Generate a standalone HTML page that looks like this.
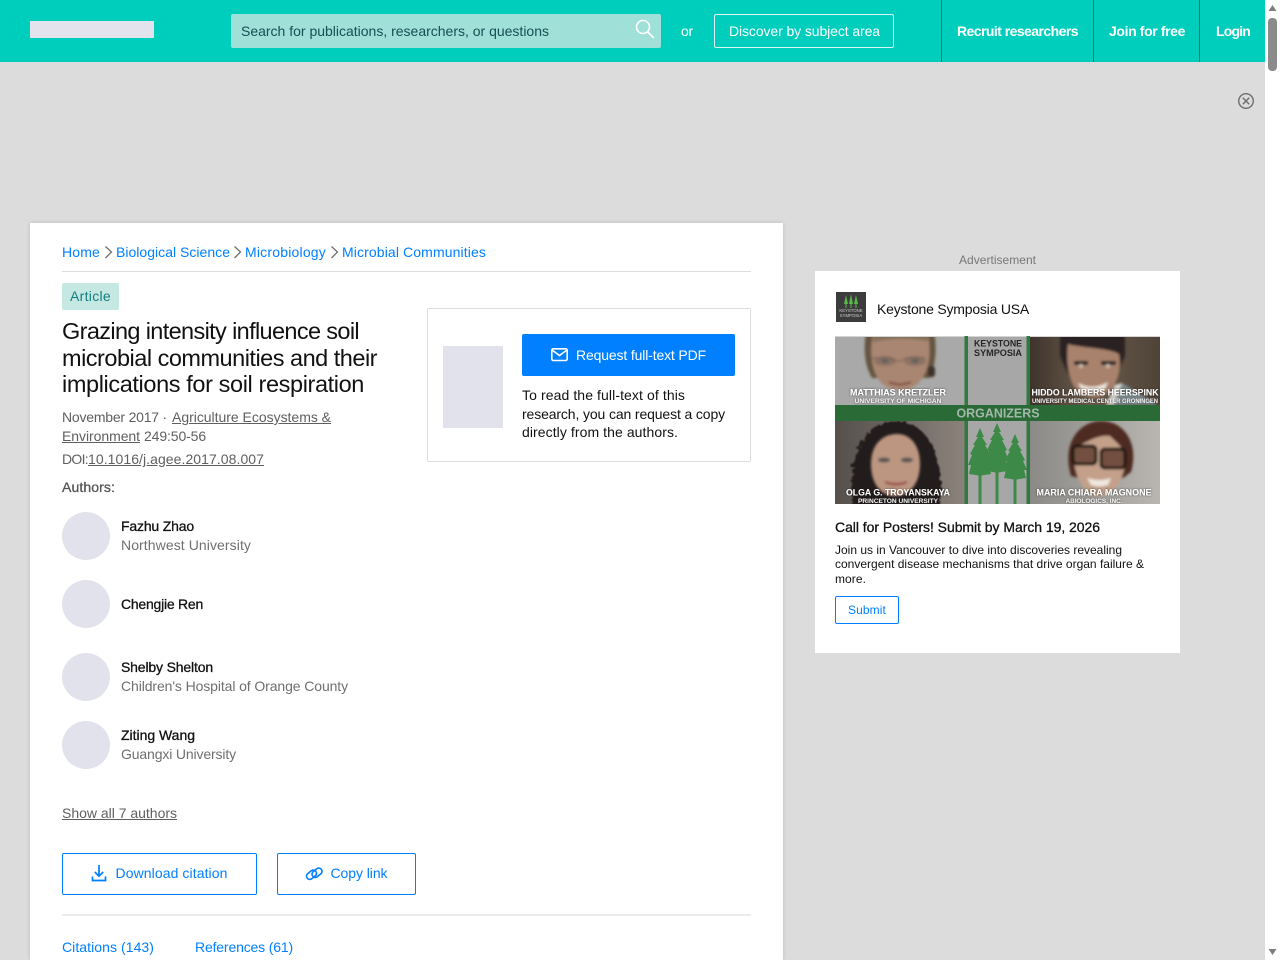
<!DOCTYPE html>
<html lang="en"><head><meta charset="utf-8"><title>Grazing intensity influence soil microbial communities</title>
<style>
html,body{margin:0;padding:0;width:1280px;height:960px;overflow:hidden;background:#fff}
body{font-family:"Liberation Sans",sans-serif;position:relative}
.a,.t{position:absolute}
.t{white-space:nowrap;line-height:20px;height:20px;font-size:14px}
.b{color:#0080ff}.g{color:#5f5f5f}.k{color:#111}
.u{text-decoration:underline}
.m{-webkit-text-stroke:.3px currentColor}
.w{color:#fff}
svg{position:absolute;display:block;overflow:visible}
</style></head><body>
<div class="a" style="left:0;top:0;width:1265px;height:960px;background:#dcdcdc"></div>

<!-- header -->
<div class="a" style="left:0;top:0;width:1265px;height:62px;background:#00cebc"></div>
<div class="a" style="left:30px;top:21px;width:124px;height:17px;background:#e3e3ed"></div>
<div class="a" style="left:231px;top:14px;width:430px;height:34px;background:#9fe0d9;border-radius:2px"></div>
<div class="t" style="left:241px;top:21px;color:#164f52;--w:308">Search for publications, researchers, or questions</div>
<svg style="left:625px;top:10px" width="40" height="40" fill="none" stroke="#fff" stroke-width="1.6"><circle cx="18" cy="17" r="6.5"/><path d="M22.8 22l6 6"/></svg>
<div class="t w" style="left:681px;top:21px;--w:12">or</div>
<div class="a" style="left:714px;top:14px;width:178px;height:32px;border:1.5px solid #d8f6f3;border-radius:2px"></div>
<div class="t w" style="left:729px;top:21px;--w:151">Discover by subject area</div>
<div class="a" style="left:941px;top:0;width:1px;height:62px;background:#047f77"></div>
<div class="a" style="left:1093px;top:0;width:1px;height:62px;background:#047f77"></div>
<div class="a" style="left:1199px;top:0;width:1px;height:62px;background:#047f77"></div>
<div class="t w" style="left:957px;top:21px;font-weight:bold;--w:121">Recruit researchers</div>
<div class="t w" style="left:1109px;top:21px;font-weight:bold;--w:76">Join for free</div>
<div class="t w" style="left:1216px;top:21px;font-weight:bold;--w:34">Login</div>

<!-- scrollbar -->
<div class="a" style="left:1268px;top:18px;width:9px;height:53px;background:#8b8b8b;border-radius:4px"></div>
<svg style="left:1265px;top:0" width="15" height="960" fill="#7d7d7d"><path d="M3.5 11L7.5 5l4 6z"/><path d="M3.5 949l4 6 4-6z"/></svg>
<!-- close -->
<svg style="left:1230px;top:85px" width="30" height="30" fill="none" stroke="#6d6d6d" stroke-width="1.4"><circle cx="16" cy="16" r="7.3"/><path d="M12.8 12.8l6.4 6.4M19.2 12.8l-6.4 6.4"/></svg>

<!-- card -->
<div class="a" style="left:30px;top:223px;width:753px;height:737px;background:#fff;box-shadow:0 0 4px rgba(0,0,0,.14)"></div>
<div class="t b" style="left:62px;top:242px;--w:38">Home</div>
<svg style="left:104px;top:245px" width="10" height="15" fill="none" stroke="#6f6f6f" stroke-width="1.3"><path d="M1.5 1.5L7.5 7l-6 6"/></svg>
<div class="t b" style="left:116px;top:242px;--w:114">Biological Science</div>
<svg style="left:233px;top:245px" width="10" height="15" fill="none" stroke="#6f6f6f" stroke-width="1.3"><path d="M1.5 1.5L7.5 7l-6 6"/></svg>
<div class="t b" style="left:245px;top:242px;--w:81">Microbiology</div>
<svg style="left:330px;top:245px" width="10" height="15" fill="none" stroke="#6f6f6f" stroke-width="1.3"><path d="M1.5 1.5L7.5 7l-6 6"/></svg>
<div class="t b" style="left:342px;top:242px;--w:144">Microbial Communities</div>
<div class="a" style="left:62px;top:271px;width:689px;height:1px;background:#ddd"></div>

<div class="a" style="left:62px;top:283px;width:57px;height:27px;background:#c6e8e3;border-radius:2px"></div>
<div class="t" style="left:70px;top:286px;color:#0f7f80;--w:41">Article</div>

<div class="t k" style="left:62px;top:318px;height:26px;line-height:26px;font-size:23.500px;--w:297">Grazing intensity influence soil</div>
<div class="t k" style="left:62px;top:345px;height:26px;line-height:26px;font-size:23.500px;--w:315">microbial communities and their</div>
<div class="t k" style="left:62px;top:371px;height:26px;line-height:26px;font-size:23.500px;--w:302">implications for soil respiration</div>

<div class="t g" style="left:62px;top:407px;--w:105">November 2017 ·</div>
<div class="t g u" style="left:172px;top:407px;--w:159">Agriculture Ecosystems &amp;</div>
<div class="t g u" style="left:62px;top:426px;--w:78">Environment</div>
<div class="t g" style="left:144px;top:426px;--w:62">249:50-56</div>
<div class="t g" style="left:62px;top:449px;--w:26">DOI:</div>
<div class="t g u" style="left:88px;top:449px;--w:176">10.1016/j.agee.2017.08.007</div>
<div class="t m" style="left:62px;top:477px;color:#555;--w:53">Authors:</div>

<div class="a" style="left:62px;top:512px;width:48px;height:48px;border-radius:50%;background:#e2e2ec"></div>
<div class="a" style="left:62px;top:580px;width:48px;height:48px;border-radius:50%;background:#e2e2ec"></div>
<div class="a" style="left:62px;top:653px;width:48px;height:48px;border-radius:50%;background:#e2e2ec"></div>
<div class="a" style="left:62px;top:721px;width:48px;height:48px;border-radius:50%;background:#e2e2ec"></div>

<div class="t k m" style="left:121px;top:516px;--w:73">Fazhu Zhao</div>
<div class="t" style="left:121px;top:535px;color:#6f6f6f;--w:130">Northwest University</div>
<div class="t k m" style="left:121px;top:594px;--w:82">Chengjie Ren</div>
<div class="t k m" style="left:121px;top:657px;--w:92">Shelby Shelton</div>
<div class="t" style="left:121px;top:676px;color:#6f6f6f;--w:227">Children's Hospital of Orange County</div>
<div class="t k m" style="left:121px;top:725px;--w:74">Ziting Wang</div>
<div class="t" style="left:121px;top:744px;color:#6f6f6f;--w:115">Guangxi University</div>

<div class="t g u" style="left:62px;top:803px;--w:115">Show all 7 authors</div>

<div class="a" style="left:62px;top:853px;width:193px;height:40px;border:1px solid #0080ff;border-radius:2px"></div>
<svg style="left:90px;top:864px" width="18" height="19" fill="none" stroke="#0080ff" stroke-width="1.7"><path d="M9 1v11M4.8 8L9 12.2 13.2 8M2.5 12.5V16.5h13V12.5"/></svg>
<div class="t b" style="left:115.500px;top:863px;--w:112">Download citation</div>
<div class="a" style="left:277px;top:853px;width:137px;height:40px;border:1px solid #0080ff;border-radius:2px"></div>
<svg style="left:304px;top:865px" width="20" height="18" fill="none" stroke="#0080ff" stroke-width="1.6"><rect x="2" y="6.500" width="11" height="6.500" rx="3.250" transform="rotate(-38 7.500 9.750)"/><rect x="7.500" y="4.500" width="11" height="6.500" rx="3.250" transform="rotate(-38 13 7.750)"/></svg>
<div class="t b" style="left:330.500px;top:863px;--w:57">Copy link</div>
<div class="a" style="left:62px;top:914px;width:689px;height:2px;background:#ececec"></div>
<div class="t b" style="left:62px;top:937px;--w:92">Citations (143)</div>
<div class="t b" style="left:195px;top:937px;--w:98">References (61)</div>

<!-- request box -->
<div class="a" style="left:427px;top:308px;width:322px;height:152px;border:1px solid #ddd;border-radius:2px"></div>
<div class="a" style="left:443px;top:346px;width:60px;height:82px;background:#e2e2ec"></div>
<div class="a" style="left:522px;top:334px;width:213px;height:42px;background:#0080ff;border-radius:2px"></div>
<svg style="left:550px;top:347px" width="19" height="16" fill="none" stroke="#fff" stroke-width="1.6"><rect x="1.800" y="1.800" width="15.400" height="11.700" rx="1.500"/><path d="M2 3l7.500 5.500L17 3"/></svg>
<div class="t w" style="left:576px;top:345px;--w:130">Request full-text PDF</div>
<div class="t k" style="left:522px;top:385px;--w:163">To read the full-text of this</div>
<div class="t k" style="left:522px;top:404px;--w:203">research, you can request a copy</div>
<div class="t k" style="left:522px;top:422px;--w:156">directly from the authors.</div>

<!-- ad -->
<div class="t" style="left:959px;top:250px;font-size:12px;color:#777;--w:77">Advertisement</div>
<div class="a" style="left:815px;top:271px;width:365px;height:382px;background:#fff"></div>
<svg style="left:836px;top:292px" width="30" height="30"><rect width="30" height="30" fill="#3c3c3c"/><path d="M10 3l2 9h-4zM15 2l2 10h-4zM20 3l2 9h-4z" fill="#57b947"/><rect x="9.500" y="11" width="1" height="5" fill="#57b947"/><rect x="14.500" y="11" width="1" height="5" fill="#57b947"/><rect x="19.500" y="11" width="1" height="5" fill="#57b947"/><text x="15" y="20" text-anchor="middle" font-size="4.300" fill="#ccc" font-family="Liberation Sans">KEYSTONE</text><text x="15" y="25" text-anchor="middle" font-size="4.300" fill="#ccc" font-family="Liberation Sans">SYMPOSIA</text></svg>
<div class="t k" style="left:877px;top:299px;--w:152">Keystone Symposia USA</div>

<svg style="left:835px;top:336px;overflow:hidden" width="325" height="168" viewBox="0 0 325 168" font-family="Liberation Sans">
<defs>
<filter id="b" x="-20%" y="-20%" width="140%" height="140%"><feGaussianBlur stdDeviation="1.200"/></filter>
<filter id="c" x="-20%" y="-20%" width="140%" height="140%"><feTurbulence type="fractalNoise" baseFrequency=".22" numOctaves="2" seed="3"/><feDisplacementMap in="SourceGraphic" scale="7"/><feGaussianBlur stdDeviation=".7"/></filter>
<filter id="s" x="-10%" y="-30%" width="120%" height="160%"><feDropShadow dx="0" dy="0" stdDeviation="1" flood-color="#000" flood-opacity=".65"/></filter>
<clipPath id="p1"><rect width="129.500" height="69"/></clipPath>
<clipPath id="p2"><rect x="195" width="130" height="69"/></clipPath>
<clipPath id="p3"><rect y="85" width="129.500" height="83"/></clipPath>
<clipPath id="p4"><rect x="195" y="85" width="130" height="83"/></clipPath>
<linearGradient id="d2" x1="0" x2="1"><stop offset="0" stop-color="#3e342c"/><stop offset=".45" stop-color="#6b5b4c"/><stop offset="1" stop-color="#4f4338"/></linearGradient>
<linearGradient id="d3" x1="0" x2="1"><stop offset="0" stop-color="#55504c"/><stop offset="1" stop-color="#8b827b"/></linearGradient>
<linearGradient id="d4" x1="0" x2="1"><stop offset="0" stop-color="#8b8a86"/><stop offset="1" stop-color="#b9b6b2"/></linearGradient>
</defs>
<rect width="325" height="168" fill="#a7a7a7"/>
<!-- panel 1 -->
<g clip-path="url(#p1)"><rect width="130" height="69" fill="#a9a9a9"/><g filter="url(#b)">
<path d="M31 -4C28 15 30 30 37 42L95 42C101 28 102 10 99 -4z" fill="#65553f"/>
<path d="M38 -2H93C96 14 96 38 80 50C72 55 58 55 50 50C36 40 34 16 38 -2z" fill="#a98672"/>
<path d="M38 -3H93V5C75 2 55 2 38 6z" fill="#84715a"/>
<ellipse cx="50" cy="25" rx="11" ry="5" fill="#8e7263"/><ellipse cx="80" cy="25" rx="11" ry="5" fill="#8e7263"/>
<ellipse cx="50" cy="25" rx="4" ry="2" fill="#5f615d"/><ellipse cx="80" cy="25" rx="4" ry="2" fill="#5f615d"/>
<path d="M36 22h19l5 3 6 0 5-3h19" stroke="#6d5d53" stroke-width="1" fill="none"/>
<path d="M54 46q11 5 22 0" stroke="#7a4235" stroke-width="2" fill="none"/>
<rect x="93" y="30" width="7" height="11" rx="3" fill="#3b322c"/>
</g></g>
<!-- panel 2 -->
<g clip-path="url(#p2)"><rect x="195" width="130" height="69" fill="url(#d2)"/><g filter="url(#b)">
<path d="M225 -4V20L233 38H282L290 20V-4z" fill="#2a2420"/>
<path d="M233 8C245 12 275 12 284 18C287 35 282 52 268 60C258 64 246 60 240 52C233 42 231 22 233 8z" fill="#a9826d"/>
<path d="M239 27h14M266 27h15" stroke="#2e2521" stroke-width="4"/>
<circle cx="246" cy="30" r="2" fill="#cbbfb3"/><circle cx="273" cy="30" r="2" fill="#cbbfb3"/>
<path d="M243 47q15 8 30 -1l-3 7q-13 5-24 0z" fill="#efe6dc"/>
<path d="M279 69L287 47l36 22z" fill="#7d8c90"/>
<path d="M287 47l-8 22h-8l9-20z" fill="#ddd9d2"/>
</g></g>
<!-- panel 3 -->
<g clip-path="url(#p3)"><rect y="85" width="130" height="83" fill="url(#d3)"/>
<path d="M18 175C12 130 22 88 60 85C96 84 112 130 104 175z" fill="#231b1a" filter="url(#c)"/>
<g filter="url(#b)">
<path d="M36 128C36 108 48 98 62 98C76 98 85 110 85 128C85 148 74 160 60 160C46 160 36 148 36 128z" fill="#bc9681"/>
<ellipse cx="49" cy="124" rx="6" ry="2.500" fill="#5b5452"/><ellipse cx="72" cy="124" rx="6" ry="2.500" fill="#5b5452"/>
<path d="M50 146q11 4 22 0q-11 5-22 0z" stroke="#9c5150" stroke-width="2.500" fill="#efe5de"/>
</g></g>
<!-- panel 4 -->
<g clip-path="url(#p4)"><rect x="195" y="85" width="130" height="83" fill="url(#d4)"/><g filter="url(#b)">
<path d="M236 140C226 105 246 85 266 85C290 85 304 108 296 136L288 142H244z" fill="#4e2b20"/>
<path d="M238 112C250 108 262 98 275 100C280 105 288 112 291 118C291 140 280 160 264 160C248 160 238 138 238 112z" fill="#c4a08a"/>
<rect x="238" y="110" width="23" height="18" rx="4" fill="#72503f" stroke="#15120f" stroke-width="3"/>
<rect x="266" y="113" width="24" height="19" rx="4" fill="#72503f" stroke="#15120f" stroke-width="3"/>
<path d="M252 142q13 4 24 0l-3 7q-9 3-17 0z" fill="#f0e8e0"/>
</g></g>
<!-- centre -->
<rect y="0" width="325" height="1" fill="#d4d4d4"/>
<rect x="129.500" width="3.500" height="168" fill="#2f7a3f"/>
<rect x="191.500" width="3.500" height="168" fill="#2f7a3f"/>
<rect y="69" width="325" height="16" fill="#2a6a37"/>
<g fill="#3d8a48">
<path id="tr" d="M145 92l4 9-2 0 5 8-2 0 5 9-2 1 4 10-3 0 2 9-7 1-4 1-4-1-7-1 2-9-3 0 4-10-2-1 5-9-2 0 5-8-2 0z"/>
<rect x="143.500" y="134" width="3" height="34"/>
<path d="M162 87l4 9-2 0 5 8-2 0 5 10-2 1 4 10-3 0 2 10-7 1-4 1-4-1-7-1 2-10-3 0 4-10-2-1 5-10-2 0 5-8-2 0z"/>
<rect x="160.500" y="132" width="3" height="36"/>
<path d="M180 98l4 9-2 0 5 8-2 0 5 9-2 1 4 9-3 0 2 8-7 1-4 1-4-1-7-1 2-8-3 0 4-9-2-1 5-9-2 0 5-8-2 0z"/>
<rect x="178.500" y="138" width="3" height="30"/>
</g>
<g font-weight="bold" text-anchor="middle">
<text x="163" y="10.500" font-size="8.800" fill="#262626" textLength="48" lengthAdjust="spacingAndGlyphs">KEYSTONE</text>
<text x="163" y="20" font-size="8.800" fill="#262626" textLength="48" lengthAdjust="spacingAndGlyphs">SYMPOSIA</text>
<text x="163" y="81.500" font-size="12.500" fill="#a3b8a9" textLength="83" lengthAdjust="spacingAndGlyphs">ORGANIZERS</text>
<g fill="#fff" filter="url(#s)">
<text x="63" y="59.500" font-size="8.800" textLength="96" lengthAdjust="spacingAndGlyphs">MATTHIAS KRETZLER</text>
<text x="63" y="67" font-size="6" fill="#eee" textLength="87" lengthAdjust="spacingAndGlyphs">UNIVERSITY OF MICHIGAN</text>
<text x="260" y="59.500" font-size="8.800" textLength="127" lengthAdjust="spacingAndGlyphs">HIDDO LAMBERS HEERSPINK</text>
<text x="260" y="67" font-size="6" fill="#eee" textLength="126" lengthAdjust="spacingAndGlyphs">UNIVERSITY MEDICAL CENTER GRONINGEN</text>
<text x="63" y="159.500" font-size="8.800" textLength="104" lengthAdjust="spacingAndGlyphs">OLGA G. TROYANSKAYA</text>
<text x="63" y="167" font-size="6" fill="#eee" textLength="80" lengthAdjust="spacingAndGlyphs">PRINCETON UNIVERSITY</text>
<text x="259" y="159.500" font-size="8.800" textLength="115" lengthAdjust="spacingAndGlyphs">MARIA CHIARA MAGNONE</text>
<text x="259" y="167" font-size="6" fill="#eee" textLength="57" lengthAdjust="spacingAndGlyphs">ABIOLOGICS, INC.</text>
</g></g>
</svg>

<div class="t k m" style="left:835px;top:517px;--w:265">Call for Posters! Submit by March 19, 2026</div>
<div class="t k" style="left:835px;top:540px;font-size:12px;--w:287">Join us in Vancouver to dive into discoveries revealing</div>
<div class="t k" style="left:835px;top:554px;font-size:12px;--w:309">convergent disease mechanisms that drive organ failure &amp;</div>
<div class="t k" style="left:835px;top:569px;font-size:12px;--w:31">more.</div>
<div class="a" style="left:835px;top:596px;width:62px;height:26px;border:1px solid #0080ff;border-radius:2px"></div>
<div class="t b" style="left:848px;top:600px;font-size:12px;--w:38">Submit</div>

<script>
document.querySelectorAll('.t').forEach(function(e){
  var w=parseFloat(getComputedStyle(e).getPropertyValue('--w'));
  if(!w)return;
  var n=e.textContent.length;
  var c=e.getBoundingClientRect().width;
  e.style.letterSpacing=((w-c)/n)+'px';
});
</script>
</body></html>
